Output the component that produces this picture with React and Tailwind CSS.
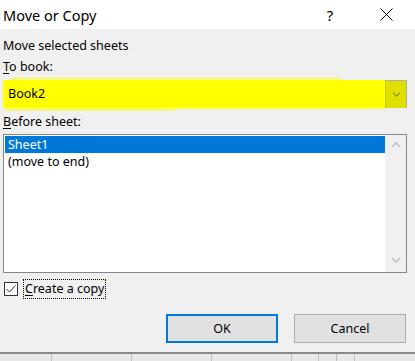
import React from "react";

function Chevron({ dir = "down", color = "#606060", w = 10, h = 6, sw = 1.2 }) {
  const d = dir === "down" ? "M1 1 L5 5 L9 1" : "M1 5 L5 1 L9 5";
  return (
    <svg width={w} height={h} viewBox="0 0 10 6" fill="none">
      <path d={d} stroke={color} strokeWidth={sw} />
    </svg>
  );
}

export default function App() {
  const font = { fontFamily: '"Noto Sans", "Open Sans", sans-serif' };
  return (
    <div
      className="relative w-[415px] h-[361px] overflow-hidden bg-[#f0f0f0] text-[#000] flex flex-col"
      style={font}
    >
      {/* Title bar */}
      <div className="h-[29px] bg-white flex items-center shrink-0">
        <div className="pl-[3px] text-[14.5px] leading-[20px] text-[#000]">Move or Copy</div>
        <div className="ml-auto flex items-center">
          <div className="w-[20px] text-center text-[15px] leading-[20px] mr-[36px]">?</div>
          <div className="w-[20px] flex justify-center mr-[19px]">
            <svg width="13" height="13" viewBox="0 0 13 13">
              <path d="M0.5 0.5 L12.5 12.5 M12.5 0.5 L0.5 12.5" stroke="#000" strokeWidth="1" />
            </svg>
          </div>
        </div>
      </div>

      {/* Body */}
      <div className="flex flex-col pl-[3px] pr-[8px] text-[12.5px] leading-[16px]">
        <div className="mt-[9px]">Move selected sheets</div>
        <div className="mt-[5px]">
          <span className="underline underline-offset-2">T</span>o book:
        </div>

        {/* Combo (highlighted) */}
        <div className="relative mt-[5px] h-[28px] flex bg-[#ffff00] rounded-[2px]">
          {/* brush fringe of the highlighter */}
          <div className="absolute left-[8px] top-[-3px] w-[330px] h-[3px] rounded-full bg-[#ffff00] opacity-40" />
          <div className="absolute left-[2px] bottom-[-3px] w-[170px] h-[3px] rounded-full bg-[#ffff00] opacity-50" />
          <div className="absolute left-[170px] bottom-[-2px] w-[210px] h-[2px] rounded-full bg-[#ffff00] opacity-30" />
          <div className="flex-1 flex items-center pl-[5px]">Book2</div>
          <div className="w-[22px] h-full border-t border-r border-[#b0b0a0] bg-[#e0e000] border-l border-l-[#c8c800] flex items-center justify-center">
            <Chevron dir="down" color="#505000" w={9} h={5} />
          </div>
        </div>

        <div className="mt-[6px]">
          <span className="underline underline-offset-2">B</span>efore sheet:
        </div>

        {/* List */}
        <div className="mt-[4px] h-[139px] border border-[#828790] bg-white flex">
          <div className="flex-1 flex flex-col pt-[1px] pl-[1px]">
            <div className="h-[17px] bg-[#0078d7] text-white pl-[3px] flex items-center">Sheet1</div>
            <div className="h-[17px] pl-[3px] flex items-center">(move to end)</div>
          </div>
          <div className="w-[21px] bg-[#f0f0f0] flex flex-col items-center justify-between pt-[7px] pb-[9px]">
            <Chevron dir="up" color="#c0c0c0" sw={1.6} />
            <Chevron dir="down" color="#c0c0c0" sw={1.6} />
          </div>
        </div>

        {/* Checkbox */}
        <div className="mt-[6px] h-[20px] flex items-center">
          <div className="ml-[1px] w-[14px] h-[14px] border border-[#333] bg-white flex items-center justify-center">
            <svg width="10" height="8" viewBox="0 0 10 8" fill="none">
              <path d="M0.5 4 L3.5 7 L9.5 0.5" stroke="#333" strokeWidth="1" />
            </svg>
          </div>
          <div className="ml-[5px] h-[20px] border border-dotted border-[#000] px-[1px] flex items-center">
            <span className="underline underline-offset-2">C</span>reate a copy
          </div>
        </div>

        {/* Buttons */}
        <div className="mt-[15px] flex justify-end gap-[16px] pr-[1px]">
          <button className="w-[112px] h-[29px] bg-[#e1e1e1] border-2 border-[#0078d7] text-[12.5px]">OK</button>
          <button className="w-[112px] h-[29px] bg-[#e1e1e1] border border-[#adadad] text-[12.5px]">Cancel</button>
        </div>
      </div>

      {/* Excel background below */}
      <div className="mt-auto h-[9px] border-t-2 border-[#8a8a8a] bg-[#e8e8e8] flex">
        <div className="w-[52px] border-r border-[#c0c0c0]" />
        <div className="w-[80px] border-r border-[#c0c0c0]" />
        <div className="w-[80px] border-r border-[#c0c0c0]" />
        <div className="w-[80px] border-r border-[#c0c0c0]" />
        <div className="w-[27px] border-r border-[#c0c0c0]" />
        <div className="w-[18px] border-r border-[#c0c0c0]" />
        <div className="w-[18px] border-r border-[#c0c0c0]" />
        <div className="flex-1" />
      </div>
    </div>
  );
}
